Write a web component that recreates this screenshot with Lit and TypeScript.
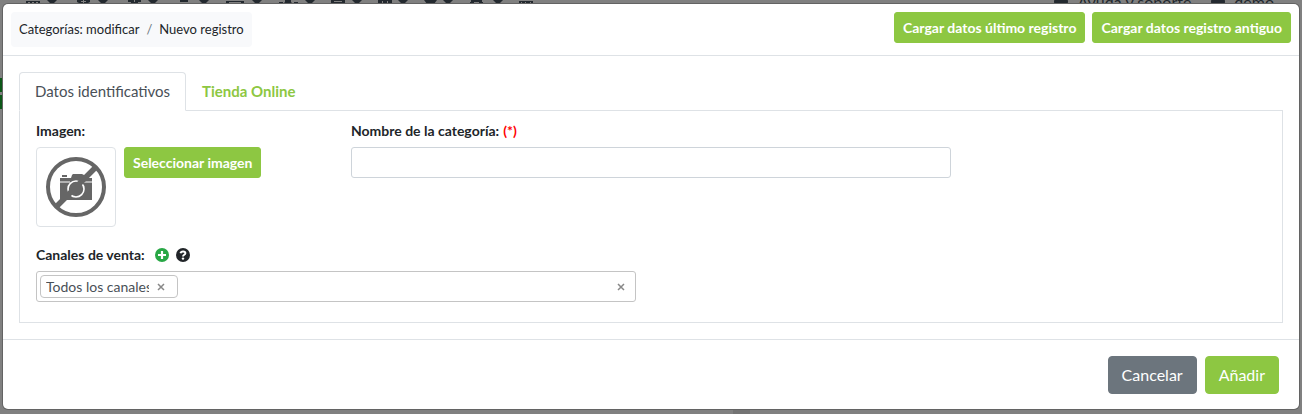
import { LitElement, html, svg, css } from "lit";
import { customElement, property, state } from "lit/decorators.js";

const NAV_ICONS = [
  { x: 26, d: "M0 1h14v3H0zM2 2h2v1H2zM6 2h2v1H6zM10 2h2v1h-2z" },
  { x: 77, d: "M0 0h13v2l-4 2H4L0 2zM6 0h1v1h2v1H7v1H6V2H4V1h2z" },
  { x: 128, d: "M0 0h13v2h-3v2H3V2H0zM6 0h1v2H6z" },
  { x: 180, d: "M0 0h8v2H0z" },
  { x: 226, d: "M0 1h18v3H0zM3 2h12v1H3z" },
  { x: 279, d: "M0 2h4v2H0zM6 0h6v2l2 2H4l2-2zM15 2h4v2h-4z" },
  { x: 331, d: "M0 0h14v4H0zM3 1h8v1H3z" },
  { x: 378, d: "M0 0h14v4H0zM4 1h1v2H4zM9 1h1v2H9z" },
  { x: 424, d: "M0 0h13L10 4H3z" },
  { x: 470, d: "M1 0h11v2h1v2H9V2H4v2H0V2h1z" },
  { x: 519, d: "M0 1h14v3H0zM2 2h1v2H2zM6 2h1v2H6zM11 2h1v2h-1z" },
];
const CARETS = [52, 103, 153, 204, 257, 310, 357, 403, 448, 498];

@customElement("page-backdrop")
export class PageBackdrop extends LitElement {
  static styles = css`
    :host { display: block; position: absolute; inset: 0; overflow: hidden; background: #808080; color: #23292f; }
    svg { display: block; }
    .user { position: absolute; top: -8px; right: 28px; display: flex; gap: 20px; font-size: 16px; line-height: 20px; }
    .item { display: flex; align-items: center; gap: 9px; }
    .dot { width: 14px; height: 14px; border-radius: 50%; background: #23292f; }
    .stripe { position: absolute; left: 0; width: 3px; height: 14px; background: #0c5718; }
    .first { top: 78px; }
    .second { top: 95px; }
    .shade { position: absolute; bottom: 0; left: 733px; width: 17px; height: 4px; background: #737373; }
  `;
  render() {
    return html`
      <svg width="560" height="8" aria-hidden="true" fill="#23292f" fill-rule="evenodd">
        ${NAV_ICONS.map((i) => svg`<path transform="translate(${i.x} 0)" d=${i.d} />`)}
        ${CARETS.map((x) => svg`<path transform="translate(${x - 5} 0)" d="M0 0h10L5 5z" />`)}
      </svg>
      <div class="stripe first"></div>
      <div class="stripe second"></div>
      <div class="shade"></div>
      <div class="user">
        <span class="item"><span class="dot"></span>Ayuda y soporte</span>
        <span class="item"><span class="dot"></span>demo</span>
      </div>
    `;
  }
}

@customElement("category-form")
export class CategoryForm extends LitElement {
  @property({ type: Array }) channels = ["Todos los canales"];

  static styles = css`
    :host { display: block; padding: 9px 16px 20px 16px; border: 1px solid #dee2e6; border-top: 0; }
    * { box-sizing: border-box; }
    .row { display: grid; grid-template-columns: 315px minmax(0, 600px); }
    .label { display: flex; align-items: center; height: 21px; margin-bottom: 6px; font-size: 14px; font-weight: 700; line-height: 21px; }
    .required { color: #f00; margin-left: 4px; }
    .picker { display: flex; align-items: flex-start; gap: 8px; }
    .thumb { width: 80px; height: 80px; padding: 8px; border: 1px solid #dee2e6; border-radius: 4px; }
    .thumb svg { display: block; }
    .pick { height: 31px; padding: 4px 8px; border: 1px solid #8dc742; border-radius: 3px; background: #8dc742; color: #fff; font: 700 14px/21px Lato, sans-serif; }
    .text { display: block; width: 100%; height: 31px; padding: 4px 8px; border: 1px solid #ced4da; border-radius: 3px; font: 14px/21px Lato, sans-serif; }
    .channels { margin-top: 17px; }
    .icons { display: flex; gap: 7px; margin-left: 10px; }
    .icon { display: flex; padding: 0; border: 0; background: none; }
    .select { display: flex; align-items: center; justify-content: space-between; max-width: 600px; height: 31px; padding: 0 10px 0 3px; border: 1px solid #c4c4c4; border-radius: 3px; }
    .tag { display: flex; align-items: center; width: 138px; height: 23px; padding: 0 12px 0 5px; border: 1px solid #c4c4c4; border-radius: 4px; color: #495057; font-size: 14px; line-height: 21px; }
    .name { flex: none; width: 103px; overflow: hidden; white-space: nowrap; }
    .x { display: flex; padding: 0; border: 0; background: none; }
    .tag .x { margin-left: 8px; }
  `;

  private cross() {
    return html`<svg width="8" height="8" viewBox="0 0 8 8" stroke="#888" stroke-width="1.5" aria-hidden="true"><path d="M1 1l6 6M7 1L1 7" /></svg>`;
  }

  render() {
    return html`
      <div class="row">
        <div>
          <label class="label" for="pick">Imagen:</label>
          <div class="picker">
            <div class="thumb">
              <svg width="62" height="62" viewBox="0 0 62 62" role="img" aria-label="Sin imagen">
                <path fill="#666" d="M17 19h5v2h-5zM15 22h11l1-3 1-1h9l2 1 1 3h7v22H15z" />
                <path d="M15 26h10M38 26h9" stroke="#fff" />
                <circle cx="31" cy="33" r="8" fill="#666" stroke="#fff" stroke-width="1.6" />
                <path d="M11 51L51 11" stroke="#666" stroke-width="5.5" />
                <circle cx="31" cy="31" r="28" fill="none" stroke="#666" stroke-width="4" />
              </svg>
            </div>
            <button class="pick" id="pick" type="button">Seleccionar imagen</button>
          </div>
        </div>
        <div>
          <label class="label" for="name">Nombre de la categoría:<span class="required">(*)</span></label>
          <input class="text" id="name" type="text" required />
        </div>
      </div>
      <div class="channels">
        <div class="label">
          <span id="channels-label">Canales de venta:</span>
          <span class="icons">
            <button class="icon" type="button" aria-label="Añadir canal">
              <svg width="14" height="14" viewBox="0 0 14 14"><circle cx="7" cy="7" r="7" fill="#28a745" /><path d="M7 3v8M3 7h8" stroke="#fff" stroke-width="2.2" /></svg>
            </button>
            <button class="icon" type="button" aria-label="Ayuda">
              <svg width="14" height="14" viewBox="0 0 14 14"><circle cx="7" cy="7" r="7" fill="#212529" /><path d="M4.5 5.2C5 2.8 9.4 2.9 9.4 5.2 9.4 6.700 7 6.700 7 8.400" fill="none" stroke="#fff" stroke-width="1.9" /><circle cx="7" cy="10.6" r="1.2" fill="#fff" /></svg>
            </button>
          </span>
        </div>
        <div class="select" role="group" aria-labelledby="channels-label">
          ${this.channels.map((c) => html`<span class="tag"><span class="name">${c}</span><button class="x" type="button" aria-label="Quitar">${this.cross()}</button></span>`)}
          <button class="x" type="button" aria-label="Quitar todos">${this.cross()}</button>
        </div>
      </div>
    `;
  }
}

@customElement("app-root")
export class AppRoot extends LitElement {
  @state() private tab = 0;
  private tabs = ["Datos identificativos", "Tienda Online"];

  static styles = css`
    :host { display: block; position: relative; min-height: 100vh; box-sizing: border-box; padding: 4px 3px; font-family: Lato, sans-serif; color: #212529; }
    * { box-sizing: border-box; }
    .modal { position: relative; background: #fff; border-radius: 5px; box-shadow: 0 0 0 1px #636363; }
    .header { display: flex; flex-wrap: wrap; justify-content: space-between; align-items: flex-start; gap: 8px; padding: 8px; border-bottom: 1px solid #dee2e6; }
    .crumbs { display: flex; gap: 7px; margin: 0; padding: 7px 8px; border-radius: 4px; background: #f8f9fb; font-size: 13px; line-height: 21px; }
    .crumbs a { color: inherit; text-decoration: none; }
    .sep { color: #6c757d; }
    .loads { display: flex; flex-wrap: wrap; gap: 7px; }
    .btn { border: 1px solid #8dc742; border-radius: 4px; background: #8dc742; color: #fff; font: 16px/24px Lato, sans-serif; padding: 6px 12px; }
    .small { padding: 4px 8px; border-radius: 3px; font-size: 14px; line-height: 21px; font-weight: 700; }
    .gray { background: #6c757d; border-color: #6c757d; }
    .body { padding: 16px; }
    .tabs { display: flex; border-bottom: 1px solid #dee2e6; }
    .tab { margin-bottom: -1px; padding: 7px 15px; border: 1px solid transparent; border-radius: 4px 4px 0 0; background: none; color: #8dc742; font: 700 15px/23px Lato, sans-serif; }
    .active { border-color: #dee2e6 #dee2e6 #fff; background: #fff; color: #495057; font-weight: 400; }
    .footer { display: flex; justify-content: flex-end; gap: 8px; padding: 16px 20px 15px; border-top: 1px solid #dee2e6; }
    .footer .btn { padding: 6px 13px; }
  `;

  render() {
    return html`
      <page-backdrop aria-hidden="true"></page-backdrop>
      <div class="modal" role="dialog" aria-label="Nuevo registro">
        <div class="header">
          <nav class="crumbs"><a href="#">Categorías: modificar</a><span class="sep">/</span><span>Nuevo registro</span></nav>
          <div class="loads">
            <button class="btn small" type="button">Cargar datos último registro</button>
            <button class="btn small" type="button">Cargar datos registro antiguo</button>
          </div>
        </div>
        <div class="body">
          <div class="tabs" role="tablist">
            ${this.tabs.map((t, i) => html`<button type="button" role="tab" aria-selected=${i === this.tab} class="tab ${i === this.tab ? "active" : ""}" @click=${() => (this.tab = i)}>${t}</button>`)}
          </div>
          <category-form></category-form>
        </div>
        <div class="footer">
          <button class="btn gray" type="button">Cancelar</button>
          <button class="btn" type="button">Añadir</button>
        </div>
      </div>
    `;
  }
}
